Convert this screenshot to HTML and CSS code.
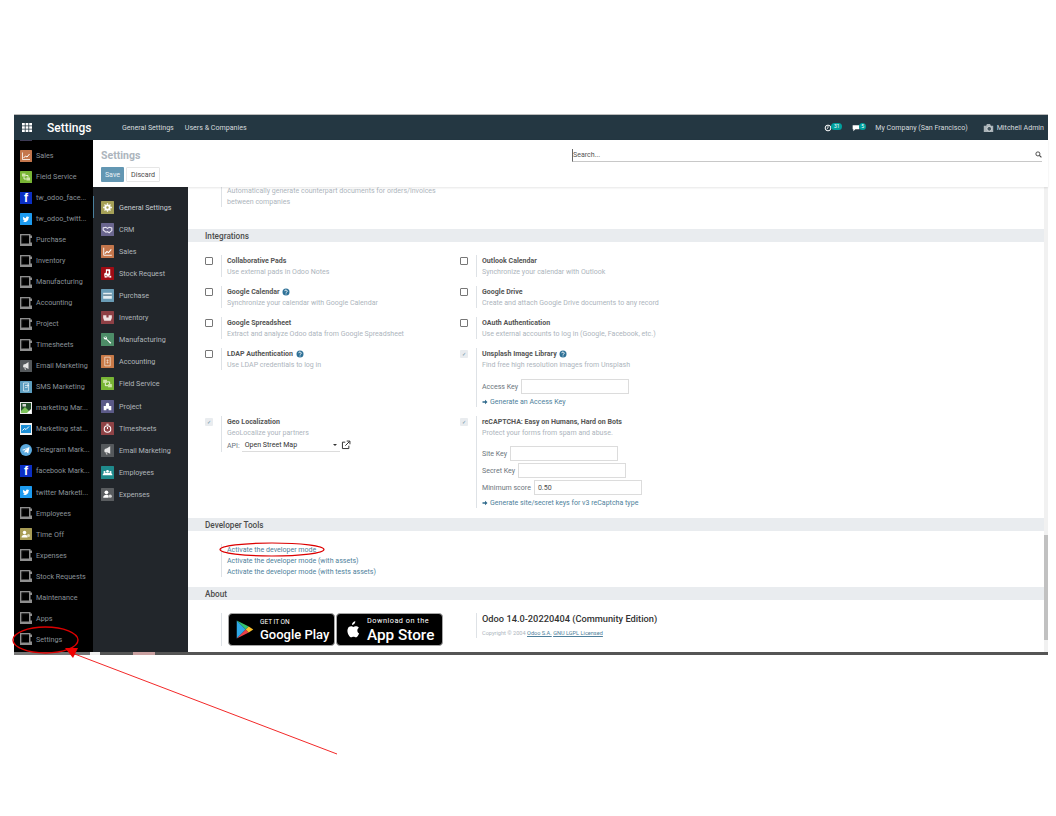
FILE: index.html
```html
<!DOCTYPE html>
<html lang="en">
<head>
  <meta charset="UTF-8">
  <title>Settings - Odoo</title>
  <link rel="stylesheet" href="styles.css">
</head>
<body>
  <!-- icon sprite -->
  <svg class="sprite" xmlns="http://www.w3.org/2000/svg">
    <symbol id="i-blank" viewBox="0 0 24 24"><path d="M0 0h21v3h3v5h-3v9h3v7H0z M3 3v16h15V3z" fill="#8f8f8f" fill-rule="evenodd"/><path d="M6 6h12v11H6z" fill="#000"/><path d="M3 3h15v1.500H4.500V19H3z" fill="#222"/></symbol>
    <symbol id="i-sales" viewBox="0 0 24 24"><rect width="24" height="24" rx="1" fill="#c4764c"/><path d="M5 5v14h15" fill="none" stroke="#fff" stroke-width="1.6"/><path d="M7 16l4-4 3 2 5-6" fill="none" stroke="#fff" stroke-width="2"/></symbol>
    <symbol id="i-fsm" viewBox="0 0 24 24"><rect width="24" height="24" rx="1" fill="#78b535"/><rect x="4" y="5" width="7" height="6" fill="#cfe6a8"/><rect x="13" y="13" width="7" height="6" fill="#cfe6a8"/><path d="M11 9h5v4M13 16H8v-5" fill="none" stroke="#fff" stroke-width="1.5"/></symbol>
    <symbol id="i-tw" viewBox="0 0 24 24"><rect width="24" height="24" rx="1" fill="#1d9bf0"/><path d="M19 8.200c-.5.200-1 .4-1.600.4.600-.3 1-.9 1.200-1.500-.5.300-1.100.6-1.800.7a2.800 2.800 0 0 0-4.800 2.500c-2.300-.1-4.400-1.200-5.800-2.900-.7 1.300-.3 2.900.9 3.700-.5 0-.9-.1-1.300-.3 0 1.300 1 2.500 2.300 2.800-.4.100-.8.100-1.300 0 .4 1.100 1.400 1.900 2.600 1.900A5.700 5.700 0 0 1 5 16.700 8 8 0 0 0 17.300 9.600c.7-.4 1.200-.9 1.700-1.400z" fill="#fff"/></symbol>
    <symbol id="i-time" viewBox="0 0 24 24"><rect width="24" height="24" rx="1" fill="#a89c55"/><circle cx="9" cy="9" r="3.500" fill="#fff"/><path d="M3 19c0-4 3-5.500 6-5.500s5 1 6 3v2.500z" fill="#fff"/><circle cx="17" cy="15" r="3" fill="#e5e0c0"/></symbol>
    <symbol id="i-email" viewBox="0 0 24 24"><rect width="24" height="24" rx="1" fill="#55595c"/><path d="M17 4v14l-6-3H7l-1-2 1-4 4-1z" fill="#e6e6e6"/><path d="M8 15l2 5h2l-1-5z" fill="#bbb"/></symbol>
    <symbol id="i-sms" viewBox="0 0 24 24"><rect width="24" height="24" rx="1" fill="#5d9ec0"/><path d="M7 4h10v16H7z" fill="none" stroke="#dcebf3" stroke-width="1.500"/><path d="M10 9h7M10 13h5M14 7l3 2-3 2" fill="none" stroke="#fff" stroke-width="1.200"/></symbol>
    <symbol id="i-broken" viewBox="0 0 24 24"><rect width="24" height="24" fill="#e8e8e8"/><rect x="2" y="2" width="20" height="20" fill="#244f2c"/><path d="M2 18l8-8 12 12H2z" fill="#7cc35a"/><path d="M14 22l8-8v8z" fill="#fff"/><rect x="5" y="4" width="7" height="5" fill="#d8d8d8"/></symbol>
    <symbol id="i-stat" viewBox="0 0 24 24"><rect width="24" height="24" fill="#f0f0f0"/><rect x="2" y="4" width="20" height="16" fill="#1c8fd6"/><path d="M5 15l4-4 3 2 6-6" fill="none" stroke="#fff" stroke-width="2"/></symbol>
    <symbol id="i-tg" viewBox="0 0 24 24"><circle cx="12" cy="12" r="12" fill="#5ba9dd"/><path d="M4 12l15-6-2.500 13-4.500-3.500-2.500 2.500-.5-4 7-6-9 5z" fill="#fff"/></symbol>
    <symbol id="i-gear" viewBox="0 0 24 24"><rect width="24" height="24" rx="1" fill="#a5a057"/><circle cx="12" cy="12" r="4" fill="none" stroke="#fff" stroke-width="3.500"/><path d="M12 4v3M12 17v3M4 12h3M17 12h3M6.500 6.500l2 2M15.500 15.500l2 2M17.500 6.500l-2 2M8.500 15.500l-2 2" stroke="#fff" stroke-width="2.400"/></symbol>
    <symbol id="i-crm" viewBox="0 0 24 24"><rect width="24" height="24" rx="1" fill="#6a668f"/><path d="M4 9l5-1 3 2 3-2 5 1v5l-5 4-3-2-3 1-5-4z" fill="none" stroke="#e8e6f2" stroke-width="2"/></symbol>
    <symbol id="i-stock" viewBox="0 0 24 24"><rect width="24" height="24" rx="1" fill="#a00c14"/><path d="M9 4h8v15H6v-7l3-2z" fill="#fff"/><circle cx="9" cy="18" r="2.500" fill="#fff" stroke="#a00c14"/><circle cx="17" cy="18" r="2.500" fill="#fff" stroke="#a00c14"/><rect x="11" y="7" width="3" height="5" fill="#a00c14"/></symbol>
    <symbol id="i-purchase" viewBox="0 0 24 24"><rect width="24" height="24" rx="1" fill="#6a9cb6"/><rect x="4" y="7" width="16" height="11" fill="#e3edf2"/><rect x="4" y="10" width="16" height="2.500" fill="#56788c"/></symbol>
    <symbol id="i-inventory" viewBox="0 0 24 24"><rect width="24" height="24" rx="1" fill="#8e4045"/><path d="M4 8h6v4h4V8h6v5l-2 5H6l-2-5z" fill="#f0e2e2"/></symbol>
    <symbol id="i-mfg" viewBox="0 0 24 24"><rect width="24" height="24" rx="1" fill="#4d8d68"/><path d="M6 6a4 4 0 0 1 5 5l8 7-2 2-7-8a4 4 0 0 1-5-5l3 2 2-1z" fill="#fff"/></symbol>
    <symbol id="i-acc" viewBox="0 0 24 24"><rect width="24" height="24" rx="1" fill="#c97a48"/><path d="M7 4h10v16H7z" fill="none" stroke="#f2dccb" stroke-width="1.500"/><path d="M12 8v8M10 10h4M10 14h4" stroke="#f2dccb" stroke-width="1.200"/></symbol>
    <symbol id="i-project" viewBox="0 0 24 24"><rect width="24" height="24" rx="1" fill="#5b5a88"/><path d="M5 11h4V8a3 3 0 0 1 6 0v3h4v8h-5v-3h-4v3H5z" fill="#fff"/></symbol>
    <symbol id="i-timer" viewBox="0 0 24 24"><rect width="24" height="24" rx="1" fill="#8f4346"/><circle cx="12" cy="13" r="6" fill="none" stroke="#fff" stroke-width="2"/><path d="M12 13V9M10 4h4" stroke="#fff" stroke-width="2"/></symbol>
    <symbol id="i-emp" viewBox="0 0 24 24"><rect width="24" height="24" rx="1" fill="#1f8a8c"/><circle cx="12" cy="10" r="2.600" fill="#fff"/><circle cx="6.500" cy="11" r="2" fill="#fff"/><circle cx="17.500" cy="11" r="2" fill="#fff"/><path d="M3 17c0-3 2-4 4-4h10c2 0 4 1 4 4z" fill="#fff"/></symbol>
    <symbol id="i-exp" viewBox="0 0 24 24"><rect width="24" height="24" rx="1" fill="#5a5d60"/><circle cx="10" cy="8" r="3.500" fill="#fff"/><path d="M4 18c0-4 3-5.500 6-5.500 2 0 3 .5 4 1.500v4z" fill="#fff"/><circle cx="17" cy="15" r="3" fill="#d5d5d5"/></symbol>
    <symbol id="i-help" viewBox="0 0 24 24"><circle cx="12" cy="12" r="10.500" fill="#2f7197"/><path d="M8.500 9.500a3.500 3.500 0 1 1 5.500 3c-1.300.8-2 1.300-2 2.500" fill="none" stroke="#fff" stroke-width="2.600"/><rect x="10.600" y="16.500" width="2.800" height="2.800" fill="#fff"/></symbol>
    <symbol id="i-arrow" viewBox="0 0 24 24"><path d="M2 9h10V3l10 9-10 9v-6H2z" fill="#2f6a8c"/></symbol>
  </svg>

  <div class="app">
    <header class="navbar">
      <svg class="apps-grid" viewBox="0 0 10 9"><path d="M0 0h2.800v2.500H0zM3.600 0h2.800v2.500H3.600zM7.200 0H10v2.500H7.200zM0 3.250h2.800v2.500H0zM3.600 3.250h2.800v2.500H3.600zM7.200 3.250H10v2.500H7.200zM0 6.500h2.800V9H0zM3.600 6.500h2.800V9H3.600zM7.200 6.500H10V9H7.200z" fill="#fff"/></svg>
      <span class="brand">Settings</span>
      <a class="menu-item">General Settings</a>
      <a class="menu-item">Users &amp; Companies</a>
      <div class="systray">
        <span class="tray-icon">
          <svg viewBox="0 0 12 12"><circle cx="6" cy="6" r="4.300" fill="none" stroke="#fff" stroke-width="1.500"/><path d="M6 3v3l-2 1.500" fill="none" stroke="#fff" stroke-width="1.200"/></svg>
          <span class="badge badge-wide">31</span>
        </span>
        <span class="tray-icon tray-chat">
          <svg viewBox="0 0 12 12"><path d="M1 2h10v6H5l-3 3V8H1z" fill="#fff"/></svg>
          <span class="badge">5</span>
        </span>
        <span class="company">My Company (San Francisco)</span>
        <svg class="avatar" viewBox="0 0 14 12"><path d="M1 3h3l1-2h4l1 2h3v8H1z" fill="#aab3b8"/><circle cx="8" cy="7" r="3" fill="#44545d" stroke="#dfe4e6"/></svg>
        <span class="user">Mitchell Admin</span>
      </div>
    </header>

    <div class="main">
      <nav class="app-drawer">
        <div class="drawer-cut"></div>
        <a class="drawer-item"><svg class="ico"><use href="#i-sales"/></svg><span>Sales</span></a>
        <a class="drawer-item"><svg class="ico"><use href="#i-fsm"/></svg><span>Field Service</span></a>
        <a class="drawer-item"><span class="ico fb">f</span><span>tw_odoo_face...</span></a>
        <a class="drawer-item"><svg class="ico"><use href="#i-tw"/></svg><span>tw_odoo_twitt...</span></a>
        <a class="drawer-item"><svg class="ico"><use href="#i-blank"/></svg><span>Purchase</span></a>
        <a class="drawer-item"><svg class="ico"><use href="#i-blank"/></svg><span>Inventory</span></a>
        <a class="drawer-item"><svg class="ico"><use href="#i-blank"/></svg><span>Manufacturing</span></a>
        <a class="drawer-item"><svg class="ico"><use href="#i-blank"/></svg><span>Accounting</span></a>
        <a class="drawer-item"><svg class="ico"><use href="#i-blank"/></svg><span>Project</span></a>
        <a class="drawer-item"><svg class="ico"><use href="#i-blank"/></svg><span>Timesheets</span></a>
        <a class="drawer-item"><svg class="ico"><use href="#i-email"/></svg><span>Email Marketing</span></a>
        <a class="drawer-item"><svg class="ico"><use href="#i-sms"/></svg><span>SMS Marketing</span></a>
        <a class="drawer-item"><svg class="ico"><use href="#i-broken"/></svg><span>marketing Mar...</span></a>
        <a class="drawer-item"><svg class="ico"><use href="#i-stat"/></svg><span>Marketing stat...</span></a>
        <a class="drawer-item"><svg class="ico"><use href="#i-tg"/></svg><span>Telegram Mark...</span></a>
        <a class="drawer-item"><span class="ico fb">f</span><span>facebook Mark...</span></a>
        <a class="drawer-item"><svg class="ico"><use href="#i-tw"/></svg><span>twitter Marketi...</span></a>
        <a class="drawer-item"><svg class="ico"><use href="#i-blank"/></svg><span>Employees</span></a>
        <a class="drawer-item"><svg class="ico"><use href="#i-time"/></svg><span>Time Off</span></a>
        <a class="drawer-item"><svg class="ico"><use href="#i-blank"/></svg><span>Expenses</span></a>
        <a class="drawer-item"><svg class="ico"><use href="#i-blank"/></svg><span>Stock Requests</span></a>
        <a class="drawer-item"><svg class="ico"><use href="#i-blank"/></svg><span>Maintenance</span></a>
        <a class="drawer-item"><svg class="ico"><use href="#i-blank"/></svg><span>Apps</span></a>
        <a class="drawer-item"><svg class="ico"><use href="#i-blank"/></svg><span>Settings</span></a>
      </nav>

      <div class="workspace">
        <div class="control-panel">
          <div class="cp-left">
            <h2 class="cp-title">Settings</h2>
            <div class="cp-buttons">
              <button class="btn btn-save">Save</button>
              <button class="btn btn-discard">Discard</button>
            </div>
          </div>
          <div class="search">
            <span class="search-text">Search...</span>
            <svg class="search-icon" viewBox="0 0 12 12"><circle cx="5" cy="5" r="3.500" fill="none" stroke="#444" stroke-width="1.600"/><path d="M7.500 7.500L11 11" stroke="#444" stroke-width="2"/></svg>
          </div>
        </div>

        <div class="body-row">
          <aside class="settings-nav">
            <a class="nav-item active"><svg class="ico-lg"><use href="#i-gear"/></svg><span>General Settings</span></a>
            <a class="nav-item"><svg class="ico-lg"><use href="#i-crm"/></svg><span>CRM</span></a>
            <a class="nav-item"><svg class="ico-lg"><use href="#i-sales"/></svg><span>Sales</span></a>
            <a class="nav-item"><svg class="ico-lg"><use href="#i-stock"/></svg><span>Stock Request</span></a>
            <a class="nav-item"><svg class="ico-lg"><use href="#i-purchase"/></svg><span>Purchase</span></a>
            <a class="nav-item"><svg class="ico-lg"><use href="#i-inventory"/></svg><span>Inventory</span></a>
            <a class="nav-item"><svg class="ico-lg"><use href="#i-mfg"/></svg><span>Manufacturing</span></a>
            <a class="nav-item"><svg class="ico-lg"><use href="#i-acc"/></svg><span>Accounting</span></a>
            <a class="nav-item"><svg class="ico-lg"><use href="#i-fsm"/></svg><span>Field Service</span></a>
            <a class="nav-item"><svg class="ico-lg"><use href="#i-project"/></svg><span>Project</span></a>
            <a class="nav-item"><svg class="ico-lg"><use href="#i-timer"/></svg><span>Timesheets</span></a>
            <a class="nav-item"><svg class="ico-lg"><use href="#i-email"/></svg><span>Email Marketing</span></a>
            <a class="nav-item"><svg class="ico-lg"><use href="#i-emp"/></svg><span>Employees</span></a>
            <a class="nav-item"><svg class="ico-lg"><use href="#i-exp"/></svg><span>Expenses</span></a>
          </aside>

          <section class="content">
            <div class="cut-off">
              <div class="setting-text">
                <p class="muted">Automatically generate counterpart documents for orders/invoices</p>
                <p class="muted">between companies</p>
              </div>
            </div>

            <h3 class="section-head">Integrations</h3>
            <div class="settings-grid">
              <div class="setting">
                <span class="check"></span>
                <div class="setting-text"><p class="label">Collaborative Pads</p><p class="muted">Use external pads in Odoo Notes</p></div>
              </div>
              <div class="setting">
                <span class="check"></span>
                <div class="setting-text"><p class="label">Outlook Calendar</p><p class="muted">Synchronize your calendar with Outlook</p></div>
              </div>
              <div class="setting">
                <span class="check"></span>
                <div class="setting-text"><p class="label">Google Calendar <svg class="help"><use href="#i-help"/></svg></p><p class="muted">Synchronize your calendar with Google Calendar</p></div>
              </div>
              <div class="setting">
                <span class="check"></span>
                <div class="setting-text"><p class="label">Google Drive</p><p class="muted">Create and attach Google Drive documents to any record</p></div>
              </div>
              <div class="setting">
                <span class="check"></span>
                <div class="setting-text"><p class="label">Google Spreadsheet</p><p class="muted">Extract and analyze Odoo data from Google Spreadsheet</p></div>
              </div>
              <div class="setting">
                <span class="check"></span>
                <div class="setting-text"><p class="label">OAuth Authentication</p><p class="muted">Use external accounts to log in (Google, Facebook, etc.)</p></div>
              </div>
              <div class="setting">
                <span class="check"></span>
                <div class="setting-text"><p class="label">LDAP Authentication <svg class="help"><use href="#i-help"/></svg></p><p class="muted">Use LDAP credentials to log in</p></div>
              </div>
              <div class="setting">
                <span class="check check-on">&#10003;</span>
                <div class="setting-text">
                  <p class="label">Unsplash Image Library <svg class="help"><use href="#i-help"/></svg></p>
                  <p class="muted">Find free high resolution images from Unsplash</p>
                  <div class="field field-first"><label>Access Key</label><span class="input"></span></div>
                  <a class="link-line"><svg class="link-arrow"><use href="#i-arrow"/></svg>Generate an Access Key</a>
                </div>
              </div>
              <div class="setting">
                <span class="check check-on">&#10003;</span>
                <div class="setting-text">
                  <p class="label">Geo Localization</p>
                  <p class="muted">GeoLocalize your partners</p>
                  <div class="field api-row">
                    <label>API:</label>
                    <span class="select">Open Street Map<i class="caret"></i></span>
                    <svg class="ext-link" viewBox="0 0 14 14"><path d="M6 3H2v9h9V8" fill="none" stroke="#333" stroke-width="1.400"/><path d="M6 8l6-6M8 1.500h4.500V6" fill="none" stroke="#333" stroke-width="1.400"/></svg>
                  </div>
                </div>
              </div>
              <div class="setting">
                <span class="check check-on">&#10003;</span>
                <div class="setting-text">
                  <p class="label">reCAPTCHA: Easy on Humans, Hard on Bots</p>
                  <p class="muted">Protect your forms from spam and abuse.</p>
                  <div class="field field-second"><label>Site Key</label><span class="input"></span></div>
                  <div class="field"><label>Secret Key</label><span class="input"></span></div>
                  <div class="field"><label>Minimum score</label><span class="input">0.50</span></div>
                  <a class="link-line"><svg class="link-arrow"><use href="#i-arrow"/></svg>Generate site/secret keys for v3 reCaptcha type</a>
                </div>
              </div>
            </div>

            <h3 class="section-head">Developer Tools</h3>
            <div class="dev-links">
              <a>Activate the developer mode</a>
              <a>Activate the developer mode (with assets)</a>
              <a>Activate the developer mode (with tests assets)</a>
            </div>

            <h3 class="section-head">About</h3>
            <div class="about">
              <div class="stores">
                <div class="store">
                  <svg class="play" viewBox="0 0 24 26"><path d="M1 1l12 12L1 25z" fill="#2fa9e8"/><path d="M1 1l16 8-4 4z" fill="#35c46f"/><path d="M1 25l16-8-4-4z" fill="#ec3f48"/><path d="M17 9l6 4-6 4-4-4z" fill="#fbc02d"/></svg>
                  <div class="store-text"><span class="store-small">GET IT ON</span><span class="store-big">Google Play</span></div>
                </div>
                <div class="store">
                  <svg class="apple" viewBox="0 0 24 28"><path d="M17 1c.2 2.800-2.500 5.600-5 5.300C11.700 3.800 14.500 1.200 17 1zM20 14.800c0-2.700 2.200-4 2.300-4.100-1.300-1.900-3.300-2.100-4-2.200-1.700-.2-3.300 1-4.200 1-.9 0-2.200-1-3.600-1-1.900 0-3.600 1.100-4.500 2.700-1.900 3.400-.5 8.300 1.400 11 .9 1.300 2 2.800 3.400 2.800 1.400-.1 1.900-.9 3.500-.9 1.600 0 2.100.9 3.500.9 1.500 0 2.400-1.300 3.300-2.700 1-1.500 1.500-3 1.500-3.100-.1 0-2.600-1-2.600-4.400z" fill="#fff"/></svg>
                  <div class="store-text"><span class="store-small store-small-apple">Download on the</span><span class="store-big store-big-apple">App Store</span></div>
                </div>
              </div>
              <div class="version">
                <p class="version-name">Odoo 14.0-20220404 (Community Edition)</p>
                <p class="copyright">Copyright &copy; 2004 <a>Odoo S.A.</a> <a>GNU LGPL Licensed</a></p>
              </div>
            </div>
          </section>

          <div class="scrollbar"><div class="scroll-thumb"></div></div>
        </div>
      </div>
    </div>

    <div class="taskbar-strip">
      <i class="blob blob-a"></i><i class="blob blob-b"></i><i class="blob blob-c"></i>
    </div>
  </div>

  <!-- red annotations drawn on top of the screenshot -->
  <svg class="marks" viewBox="0 0 1056 816">
    <ellipse cx="45.500" cy="640" rx="32.500" ry="13" fill="none" stroke="#dc0000" stroke-width="1.400"/>
    <ellipse cx="272" cy="549.500" rx="52" ry="6.500" fill="none" stroke="#dc0000" stroke-width="1.200"/>
    <path d="M337 754L72 653" stroke="#f01010" stroke-width="0.900"/>
    <path d="M65 648L78 648L73 658z" fill="#f00000"/>
  </svg>
</body>
</html>
```

FILE: styles.css
```css
body {
  margin: 0;
  padding: 114px 0 0 14px;
  background-color: white;
  font-family: 'Roboto', sans-serif;
  font-size: 7.05px;
  color: #4c4c4c;
}
p, h2, h3 {
  margin: 0;
}
.sprite {
  display: none;
}
.app {
  width: 1034px;
  border-top: 1px solid #bbb;
}

/* top bar */
.navbar {
  display: flex;
  align-items: center;
  height: 25px;
  background-color: #243742;
  color: #d5dadd;
}
.apps-grid {
  width: 10px;
  height: 9px;
  margin-left: 8px;
  margin-right: 15px;
}
.brand {
  width: 75px;
  font-size: 12px;
  font-weight: 500;
  color: white;
}
.menu-item {
  margin-right: 11px;
  font-size: 7.1px;
}
.systray {
  display: flex;
  align-items: center;
  margin-left: auto;
  padding-right: 4px;
  font-size: 7.1px;
}
.tray-icon {
  display: flex;
  align-items: center;
  margin-right: 10px;
}
.tray-icon svg {
  width: 8px;
  height: 8px;
}
.badge {
  min-width: 7px;
  height: 7px;
  margin: -3px 0 0 -1px;
  border-radius: 4px;
  background-color: #00a09d;
  font-size: 5px;
  line-height: 7px;
  text-align: center;
  color: white;
}
.badge-wide {
  min-width: 11px;
}
.tray-chat {
  margin-right: 9px;
}
.company {
  margin-right: 15px;
}
.avatar {
  width: 11px;
  height: 10px;
  margin-right: 3px;
}

.main {
  display: flex;
  height: 512px;
}

/* black apps column */
.app-drawer {
  width: 79px;
  flex-shrink: 0;
  padding-top: 5px;
  box-sizing: border-box;
  background-color: black;
  position: relative;
  overflow: hidden;
  font-size: 7.2px;
}
.drawer-cut {
  position: absolute;
  top: 0;
  left: 6px;
  width: 12px;
  height: 1px;
  background-color: #3d3a55;
}
.drawer-item {
  display: flex;
  align-items: center;
  height: 21.040px;
  padding-left: 6px;
  color: #8a9299;
}
.drawer-item span:last-child {
  white-space: nowrap;
}
.ico {
  width: 12px;
  height: 12px;
  margin-right: 4px;
  flex-shrink: 0;
}
.fb {
  display: block;
  background-color: #0b2fc4;
  color: white;
  font-family: 'Liberation Sans', sans-serif;
  font-size: 12px;
  font-weight: bold;
  line-height: 13px;
  text-align: center;
}

.workspace {
  flex: 1;
  display: flex;
  flex-direction: column;
  min-width: 0;
}

/* title, buttons and search */
.control-panel {
  display: flex;
  height: 47px;
  box-sizing: border-box;
  padding: 9px 6px 0 8px;
  background-color: white;
  box-shadow: 0 1px 2px rgba(0, 0, 0, 0.1);
  position: relative;
}
.cp-left {
  width: 471px;
}
.cp-title {
  padding-top: 1px;
  font-size: 10.500px;
  line-height: 12px;
  font-weight: 700;
  color: #adb5bd;
}
.cp-buttons {
  display: flex;
  gap: 2px;
  margin-top: 5px;
}
.btn {
  height: 15px;
  padding: 0;
  font-family: inherit;
  font-size: 7.100px;
  border: 1px solid transparent;
  border-radius: 1px;
}
.btn-save {
  width: 23px;
  background-color: #6397b3;
  color: #e8f0f4;
}
.btn-discard {
  width: 34px;
  background-color: white;
  border-color: #e6e6e6;
  color: #4c4c4c;
}
.search {
  flex: 1;
  display: flex;
  align-items: center;
  justify-content: space-between;
  height: 10px;
  padding-bottom: 2px;
  border-bottom: 1px solid #c8c8c8;
  border-left: 1px solid #666;
}
.search-text {
  color: #555;
}
.search-icon {
  width: 7px;
  height: 7px;
}

.body-row {
  flex: 1;
  display: flex;
  min-height: 0;
}

/* module list */
.settings-nav {
  width: 95px;
  flex-shrink: 0;
  padding-top: 9px;
  box-sizing: border-box;
  background-color: #22262b;
  font-size: 7.2px;
}
.nav-item {
  display: flex;
  align-items: center;
  height: 22.120px;
  padding-left: 8px;
  color: #b0b6bb;
}
.nav-item.active {
  box-shadow: inset 1px 0 0 #4a7f9c;
  color: #c8cdd1;
}
.ico-lg {
  width: 13px;
  height: 13px;
  margin-right: 5px;
  flex-shrink: 0;
}

/* main settings form */
.content {
  flex: 1;
  overflow: hidden;
  min-width: 0;
  line-height: 11px;
}
.cut-off {
  margin: -2px 0 22px 33px;
}
.section-head {
  height: 13px;
  padding-left: 17px;
  background-color: #e9ecef;
  font-size: 8.200px;
  font-weight: 500;
  line-height: 14px;
  color: #4c4c4c;
}
.settings-grid {
  display: grid;
  grid-template-columns: 255px 1fr;
  row-gap: 9px;
  align-items: start;
  padding: 13px 0 10px 17px;
}
.setting {
  display: flex;
  align-items: stretch;
}
.check {
  width: 8px;
  height: 8px;
  margin: 2px 8px 0 0;
  border: 1px solid #777;
  box-sizing: border-box;
  flex-shrink: 0;
  border-radius: 1px;
}
.check-on {
  border: 0;
  background-color: #e9ecef;
  color: #5e8aa3;
  font-size: 5px;
  line-height: 8px;
  text-align: center;
}
.setting-text {
  border-left: 1px solid #dee2e6;
  padding-left: 5px;
  flex: 1;
  min-width: 0;
}
.label {
  font-weight: 700;
  color: #555;
}
.muted {
  color: #adb5bd;
}
.help {
  width: 8px;
  height: 8px;
  margin-left: 1px;
  vertical-align: -1.500px;
}
.field {
  display: flex;
  align-items: center;
  gap: 3px;
  height: 15px;
  margin-top: 2px;
}
.field-first {
  margin-top: 9px;
}
.field-second {
  margin-top: 8px;
}
.field label {
  color: #6c757d;
}
.input {
  width: 108px;
  height: 15px;
  padding-left: 3px;
  box-sizing: border-box;
  border: 1px solid #dcdcdc;
  line-height: 13px;
  color: #4c4c4c;
}
.link-line {
  display: flex;
  align-items: center;
  margin-top: 2px;
  color: #4e7f9b;
}
.link-arrow {
  width: 6px;
  height: 6px;
  margin-right: 2px;
}
.api-row {
  height: 14px;
  margin-top: 0;
  gap: 2px;
}
.select {
  display: flex;
  align-items: center;
  justify-content: space-between;
  width: 98px;
  height: 14px;
  box-sizing: border-box;
  padding: 0 3px;
  border-bottom: 1px solid #dcdcdc;
  color: #333;
}
.caret {
  border-left: 2px solid transparent;
  border-right: 2px solid transparent;
  border-top: 2px solid #333;
}
.ext-link {
  width: 10px;
  height: 10px;
  margin-left: -1px;
}
.dev-links {
  display: flex;
  flex-direction: column;
  margin: 13px 0 10px 33px;
  padding-left: 5px;
  border-left: 1px solid #dee2e6;
  color: #4e7f9b;
}
.about {
  display: grid;
  grid-template-columns: 255px 1fr;
  padding: 13px 0 0 33px;
}
.stores {
  display: flex;
  gap: 1px;
  height: 33px;
  padding-left: 6px;
  border-left: 1px solid #dee2e6;
}
.store {
  display: flex;
  align-items: center;
  width: 107px;
  height: 33px;
  flex-shrink: 0;
  box-sizing: border-box;
  padding-left: 7px;
  border: 1px solid #a6a6a6;
  border-radius: 4px;
  background-color: black;
  color: white;
}
.play {
  width: 18px;
  height: 21px;
  margin-right: 6px;
}
.apple {
  width: 16px;
  height: 20px;
  margin-right: 7px;
}
.store-text {
  display: flex;
  flex-direction: column;
  gap: 1px;
  white-space: nowrap;
}
.store-small {
  font-size: 6.500px;
  line-height: 8px;
}
.store-small-apple {
  font-size: 7.300px;
  letter-spacing: 0.500px;
  line-height: 9px;
}
.store-big {
  font-size: 13px;
  line-height: 15px;
  font-weight: 500;
}
.store-big-apple {
  font-size: 15.300px;
  line-height: 18px;
}
.version {
  height: 25px;
  padding-left: 5px;
  border-left: 1px solid #dee2e6;
}
.version-name {
  font-size: 9.250px;
  font-weight: 500;
  line-height: 12px;
  color: #333;
}
.copyright {
  margin-top: 4px;
  font-size: 5.600px;
  line-height: 9px;
  color: #adb5bd;
}
.copyright a {
  color: #4e7f9b;
  text-decoration: underline;
}
.scrollbar {
  width: 4px;
  flex-shrink: 0;
  display: flex;
  flex-direction: column;
  justify-content: flex-end;
  padding-bottom: 12px;
  background-color: #f1f1f1;
}
.scroll-thumb {
  height: 105px;
  background-color: #c1c1c1;
}

/* what is left of the desktop below the browser */
.taskbar-strip {
  display: flex;
  height: 3px;
  background-color: #555;
}
.blob {
  height: 3px;
}
.blob-a {
  width: 76px;
  background-color: #777;
}
.blob-b {
  width: 10px;
  background-color: #eee;
}
.blob-c {
  width: 22px;
  margin-left: 33px;
  background-color: #c9a0a0;
}

.marks {
  position: absolute;
  top: 0;
  left: 0;
  width: 1056px;
  height: 816px;
  pointer-events: none;
}
```
